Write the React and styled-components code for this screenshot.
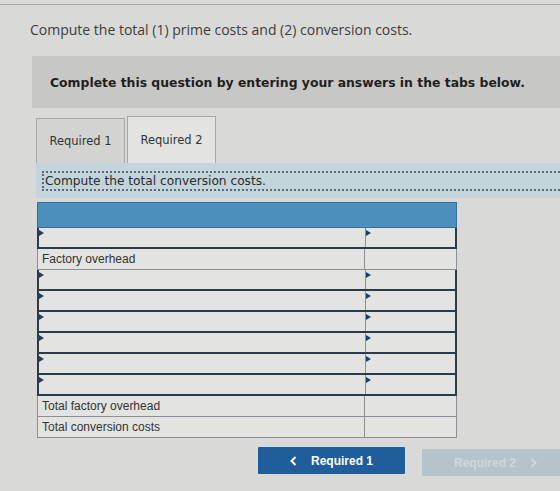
import React from "react"
import styled, { createGlobalStyle, css } from "styled-components"

const GlobalStyle = createGlobalStyle`
  body {
    margin: 0;
    background: #d9d9d7;
    font-family: "DejaVu Sans", sans-serif;
  }
`

const Page = styled.div`
  width: 560px;
  height: 491px;
  overflow: hidden;
  box-sizing: border-box;
  border-top: 1px solid #a9a9a7; // container edge above the question
  margin-top: 4px;
  padding-top: 15px;
`
const Question = styled.p`
  margin: 0 0 0 30px;
  font-family: "Open Sans", sans-serif;
  font-size: 14px;
  color: #3d3d3d;
`
const Instructions = styled.div`
  margin: 17px 0 0 32px;
  height: 52px;
  display: flex;
  align-items: center;
  padding-left: 18px;
  background: #c7c7c5;
  font-size: 12.4px;
  font-weight: bold;
  color: #1f1f1f;
`
const Tabs = styled.div`
  display: flex;
  align-items: flex-end;
  gap: 2px;
  margin: 8px 0 0 36px;
`
const Tab = styled.div`
  width: 89px;
  height: 45px;
  box-sizing: border-box;
  display: flex;
  align-items: center;
  justify-content: center;
  border: 1px solid #a8a8a6;
  border-bottom: none;
  background: #d3d3d1;
  font-size: 11.5px;
  color: #333;
  ${props =>
    props.active &&
    css`
      height: 47px;
      background: #e3e3e1;
    `}
`
const Band = styled.div`
  margin-left: 36px;
  padding: 8px 0 7px 6px;
  background: #c3d5da;
`
const Prompt = styled.div`
  border-top: 2px dotted #5a6c7a;
  border-bottom: 2px dotted #5a6c7a;
  border-left: 2px dotted #5a6c7a;
  padding: 1px 0 1px 1px;
  font-size: 12.2px;
  color: #2a2a2a;
`
const Table = styled.div`
  margin: 4px 0 0 37px;
  width: 420px;
  background: #e3e3e1;
`
const HeaderRow = styled.div`
  height: 26px;
  background: #4b8fbf;
  border: 1px solid #3a6f95;
  box-sizing: border-box;
`
const Row = styled.div`
  display: grid;
  grid-template-columns: 326px 1fr;
  height: 21px;
  box-sizing: border-box;
  border: 1px solid #8b8f93;
  border-top: none;
  ${props =>
    props.input &&
    css`
      border: 2px solid #2b3b4c;
      border-top: none;
    `}
`
const Cell = styled.div`
  position: relative;
  display: flex;
  align-items: center;
  padding-left: 4px;
  font-family: "Liberation Sans", Arial, sans-serif;
  font-size: 12px;
  color: #333;
  & + & {
    border-left: 1px solid #8b8f93;
  }
  ${props =>
    props.input &&
    css`
      & + & {
        border-left: 2px solid #2b3b4c;
      }
    `}
`
// small marker in the corner of each entry cell
const Marker = styled.span`
  position: absolute;
  top: 2px;
  left: 0;
  width: 0;
  height: 0;
  border-top: 3px solid transparent;
  border-bottom: 3px solid transparent;
  border-left: 5px solid #1f3f66;
`
const Nav = styled.div`
  display: flex;
  gap: 17px;
  margin: 9px 0 0 258px;
`
const NavButton = styled.button`
  width: 147px;
  height: 27px;
  flex-shrink: 0;
  border: none;
  border-radius: 1px;
  display: flex;
  align-items: center;
  justify-content: center;
  gap: 14px;
  font-family: "Liberation Sans", Arial, sans-serif;
  font-size: 12px;
  font-weight: bold;
  color: #fff;
  background: #1f5e9a;
  ${props =>
    props.disabled &&
    css`
      margin-top: 2px;
      background: #b5c4cb;
      color: #cdd7dc;
    `}
`

const Chevron = ({ left }) => (
  <svg width="7" height="10" viewBox="0 0 7 10">
    <path
      d={left ? "M5.5 1 L1.5 5 L5.5 9" : "M1.5 1 L5.5 5 L1.5 9"}
      fill="none"
      stroke="currentColor"
      strokeWidth="2"
    />
  </svg>
)

const InputRow = () => (
  <Row input>
    <Cell input>
      <Marker />
    </Cell>
    <Cell input>
      <Marker />
    </Cell>
  </Row>
)

const LabelRow = ({ label }) => (
  <Row>
    <Cell>{label}</Cell>
    <Cell />
  </Row>
)

const App = () => (
  <>
    <GlobalStyle />
    <Page>
      <Question>Compute the total (1) prime costs and (2) conversion costs.</Question>
      <Instructions>Complete this question by entering your answers in the tabs below.</Instructions>
      <Tabs>
        <Tab>Required 1</Tab>
        <Tab active>Required 2</Tab>
      </Tabs>
      <Band>
        <Prompt>Compute the total conversion costs.</Prompt>
      </Band>
      <Table>
        <HeaderRow />
        <InputRow />
        <LabelRow label="Factory overhead" />
        {[0, 1, 2, 3, 4, 5].map(i => (
          <InputRow key={i} />
        ))}
        <LabelRow label="Total factory overhead" />
        <LabelRow label="Total conversion costs" />
      </Table>
      <Nav>
        <NavButton>
          <Chevron left />
          Required 1
        </NavButton>
        <NavButton disabled>
          Required 2
          <Chevron />
        </NavButton>
      </Nav>
    </Page>
  </>
)

export default App
